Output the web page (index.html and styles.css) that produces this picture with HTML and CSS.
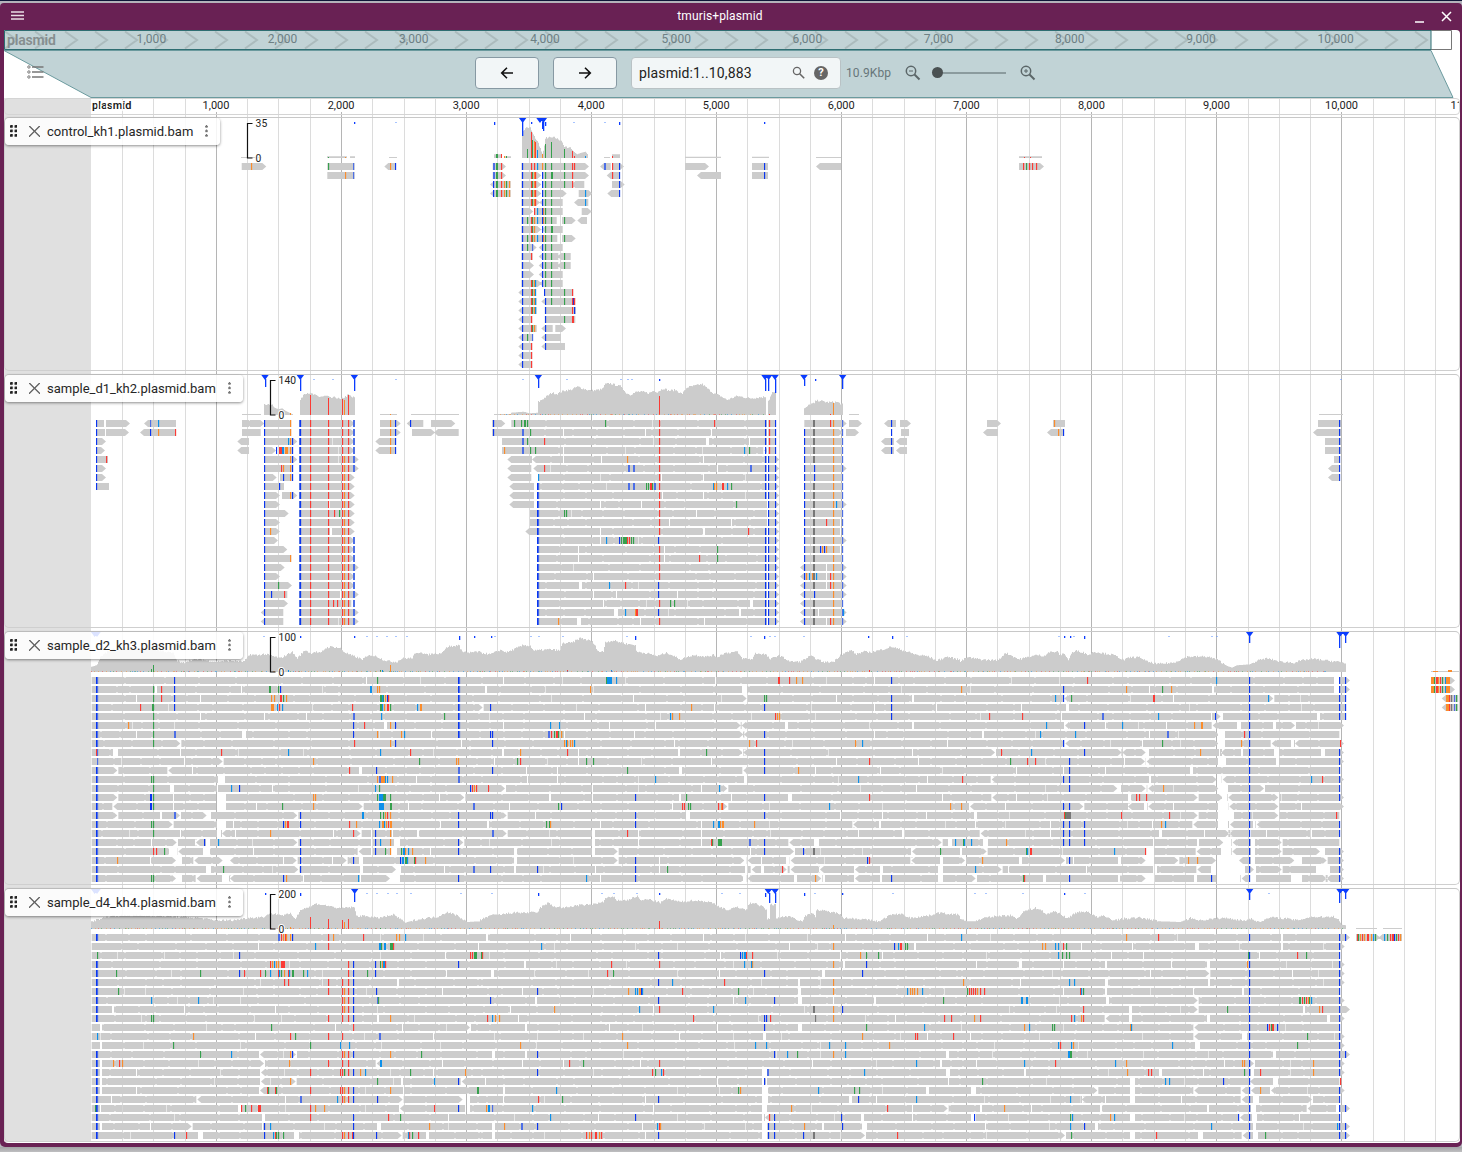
FILE: index.html
```html
<!DOCTYPE html>
<html lang="en">
<head>
<meta charset="utf-8">
<title>tmuris+plasmid</title>
<link rel="stylesheet" href="styles.css">
</head>
<body>
<div class="window">
  <header class="titlebar">
    <svg class="menu" width="14" height="10" viewBox="0 0 14 10"><path d="M0 1h13M0 4.5h13M0 8h13" stroke="#fff" stroke-opacity=".85" stroke-width="1.7"/></svg>
    <span class="title">tmuris+plasmid</span>
    <svg class="winbtns" width="40" height="16" viewBox="0 0 40 16"><path d="M1 14h9" stroke="#fff" stroke-width="1.5"/><path d="M28 4l9 9m0-9l-9 9" stroke="#fff" stroke-width="1.5"/></svg>
  </header>
  <main class="view">
    <svg class="overview" id="overview" width="1456" height="20"></svg>
    <section class="controls">
      <svg class="shade" width="1456" height="48"><path d="M0 .5H1427L1449 47.5H87Z" fill="#c1d3d6" stroke="#6b9a9e"/></svg>
      <svg class="selector" width="18" height="16" viewBox="0 0 18 16"><g fill="none" stroke="#777"><path d="M5 3h11.500M5 8h11.500M5 13h11.500" stroke-width="1.500"/><circle cx="1.900" cy="3" r="1.200"/><circle cx="1.900" cy="8" r="1.200"/><circle cx="1.900" cy="13" r="1.200"/></g></svg>
      <button class="pan"><svg width="14" height="14" viewBox="0 0 14 14"><path d="M13 7H2M7 1.700L1.700 7 7 12.300" fill="none" stroke="#111" stroke-width="1.600"/></svg></button>
      <button class="pan"><svg width="14" height="14" viewBox="0 0 14 14"><path d="M1 7h11M7 1.700L12.300 7 7 12.300" fill="none" stroke="#111" stroke-width="1.600"/></svg></button>
      <div class="search">
        <span class="loc">plasmid:1..10,883</span>
        <svg width="14" height="14" viewBox="0 0 14 14"><circle cx="5" cy="5" r="3.600" fill="none" stroke="#666" stroke-width="1.300"/><path d="M7.700 7.700l4.500 4.500" stroke="#666" stroke-width="1.600"/></svg>
        <span class="help">?</span>
      </div>
      <span class="bp">10.9Kbp</span>
      <svg class="zoomicon" width="16" height="16" viewBox="0 0 16 16"><circle cx="6" cy="6" r="4.700" fill="none" stroke="#5b6668" stroke-width="1.500"/><path d="M9.500 9.500l5 5" stroke="#5b6668" stroke-width="1.900"/><path d="M4 6h4" stroke="#5b6668"/></svg>
      <div class="slider"><i></i></div>
      <svg class="zoomicon" width="16" height="16" viewBox="0 0 16 16"><circle cx="6" cy="6" r="4.700" fill="none" stroke="#5b6668" stroke-width="1.500"/><path d="M9.500 9.500l5 5" stroke="#5b6668" stroke-width="1.900"/><path d="M4 6h4M6 4v4" stroke="#5b6668"/></svg>
    </section>
    <section class="stack">
      <svg class="grid" id="grid" width="1456" height="1044"></svg>
      <div class="ruler"><svg id="ruler" width="1456" height="16"></svg></div>
      <article class="track"><div class="label"><span class="grip"></span><span class="close"></span><span class="name">control_kh1.plasmid.bam</span><span class="dots"></span></div></article>
      <article class="track"><div class="label"><span class="grip"></span><span class="close"></span><span class="name">sample_d1_kh2.plasmid.bam</span><span class="dots"></span></div></article>
      <article class="track"><div class="label"><span class="grip"></span><span class="close"></span><span class="name">sample_d2_kh3.plasmid.bam</span><span class="dots"></span></div></article>
      <article class="track"><div class="label"><span class="grip"></span><span class="close"></span><span class="name">sample_d4_kh4.plasmid.bam</span><span class="dots"></span></div></article>
    </section>
  </main>
</div>
<script src="tracks.js"></script>
</body>
</html>
```
FILE: styles.css
```css
* { box-sizing: border-box; }
body { margin: 0; height: 1152px; overflow: hidden; font-family: Roboto, "Liberation Sans", sans-serif; background: linear-gradient(#0e1638 0 1px, #b4b3bb 1px 1147px, #a3a3a6 1147px, #bfbfc1 1152px); }
svg { display: block; flex: none; }
.window { margin-top: 3px; width: 1462px; height: 1144px; padding: 0 2px 4px 4px; background: #692154; border-radius: 4px 4px 5px 5px; display: flex; flex-direction: column; }
.titlebar { height: 27px; flex: none; display: flex; align-items: center; justify-content: space-between; padding: 0 6px 1px 7px; color: #fff; font-size: 12px; letter-spacing: .12px; }
.title { padding-left: 1px; }
.view { background: #fff; height: 1113px; border-radius: 0 4px 4px 4px; overflow: hidden; display: flex; flex-direction: column; }
.controls { position: relative; height: 48px; flex: none; display: flex; align-items: center; padding: 0 0 3px 23px; }
.shade { position: absolute; left: 0; top: 0; }
.controls > :not(.shade) { position: relative; }
.selector { margin-right: 430px; margin-bottom: 2px; }
.pan { width: 64px; height: 32px; padding: 0; margin-right: 14px; border: 1px solid #8799a3; border-radius: 4px; background: #f2f6f7; display: flex; align-items: center; justify-content: center; }
.search { width: 210px; height: 32px; margin-left: 0; padding: 0 12px 0 7px; border: 1px solid #b9c2c5; border-radius: 4px; background: #f2f6f7; display: flex; align-items: center; color: #222; }
.loc { font-size: 14px; letter-spacing: .13px; flex: 1; }
.help { width: 14px; height: 14px; margin-left: 8px; border-radius: 50%; background: #666; color: #fff; font: bold 11px/14px Roboto, sans-serif; text-align: center; }
.bp { font-size: 12px; letter-spacing: .1px; color: #67767a; width: 59px; margin-left: 5px; }
.slider { width: 69px; height: 2px; background: #8b9b9e; margin: 0 14px 0 16px; }
.slider i { display: block; width: 11px; height: 11px; border-radius: 50%; background: #4a5152; margin: -5px 0 0 -5px; }
.stack { position: relative; display: flex; flex-direction: column; gap: 3px; background: linear-gradient(90deg, #e0e0e0 87.5px, #fff 87.5px); }
.grid { position: absolute; left: 0; top: 0; }
.ruler { height: 17px; margin-bottom: -1px; border: 1px solid #d4d4d4; border-radius: 4px; position: relative; overflow: hidden; }
.ruler svg { margin: -1px; overflow: visible; }
.ruler text { font-size: 11px; fill: #1c1c1c; text-anchor: middle; paint-order: stroke; stroke: #fff; stroke-width: 3px; }
.ruler .ref, .overview .ref { font-weight: 600; text-anchor: start; }
.overview text { font-size: 12px; fill: #6d8084; text-anchor: start; letter-spacing: .05px; }
.overview .ref { font-size: 14px; fill: #858e8f; }
.track { position: relative; height: 254px; border: 1px solid #cfcfcf; border-radius: 5px; border-top-color: #c8c8c8; }
.plot { margin: -1px; overflow: visible; }
.plot text { font-size: 10.300px; fill: #222; stroke: #fff; stroke-width: 2px; paint-order: stroke; letter-spacing: .1px; }
.label { position: absolute; left: 0; top: 0; height: 27px; padding: 0 8px 1px 5px; display: flex; align-items: center; border-radius: 4px; background: rgba(255,255,255,.86); box-shadow: 0 1px 3px rgba(0,0,0,.45); color: #262626; z-index: 1; }
.grip { width: 7px; height: 12px; background: radial-gradient(circle at 1.500px 1.500px, #222 1.400px, transparent 1.700px) 0 0 / 4.500px 4.500px; }
.close { width: 11px; height: 11px; margin: 0 7px 0 12px; background: linear-gradient(45deg, transparent 45%, #666 47% 54%, transparent 56%), linear-gradient(-45deg, transparent 45%, #666 47% 54%, transparent 56%); }
.name { font-size: 13px; letter-spacing: .005px; white-space: nowrap; }
.dots { width: 3px; height: 12px; margin: 0 4px 0 12px; background: radial-gradient(circle at 1.500px 1.500px, #777 1.100px, transparent 1.500px) 0 0 / 3px 4.500px; }
```
FILE: tracks.js
```js
const COLORS = { r: '#fb3b35', g: '#36a04d', b: '#0a36f0', p: '#4d6fe6', c: '#0d90ea', o: '#fa8c2c', k: '#777777' };
const GREY = '#cccccc';
// Read rows, one string per row.  a~b read, > and < arrow tips, letter+x base mark, _ gap, ' faint gap.
// "all" marks carry a row range.  Positions are thirds of a pixel from "off" unless s is 1.
const T1 = { max: 35, axis: 247, chunks: [
 { off: 0, s: 3, all: '', rows: ['725~799> o755 982~1064 g985 p1061 <1153~1187 o1171 b1186', '982~1064 o1036 p1061'] },
 { off: 0, s: 1, all: '', rows: ['685~709> 752~768 b764 <816~841 1019~1044> r1023 g1026 r1029 r1032 r1036', '<697~721 752~768 b764'] },
 { off: 480, s: 3, all: 'b127@0-22 r154@1-4 g158@1-4 o163@1-4 r166@1-4 g196@0-13 g214@0-13 b187@1-13 r154@6-8 g158@6-8 o162@6-8 r154@13-16 g158@13-16 o162@13-16 c166@13-16 r154@18-18 g158@18-18 o163@18-18', rows: [
 '38~78> p41:2 g50:2 r64 124~327> r154 r163 c172 o187 g253 r278 r283 <360~392 p372:2 396~432> r397 b418',
 '38~78> p41:2 g50:2 r64 124~184> 186~327> g214:2 g253 r278 <380~420 r397 b418',
 '<30~92 b41 g50:2 r64 o73 g79 o88 124~184> 186~280 g253 r278 <274~313 396~434> b418',
 '<30~92 b41 g50:2 r64 o73 g79 o88 124~184> 186~260> 296~337> c316 <382~420 b418',
 '124~180> <178~248 <282~325 c316', '124~160> 163~248 r163 c172 o190 305~335>',
 '124~170 g142 <155~230 c172 o190 246~287> g253 <292~321', '124~184> <184~248 g214:2',
 '124~170 g142 <155~232 c172 o190 246~287> g253', '124~170> g142 p157 <176~248', '124~158 r154 <176~235 <232~272 g253',
 '124~162> <176~235 <232~272 g253', '124~162> <176~248', '124~185> <178~248', '<115~165 192~280 b194 g214 g253 r278',
 '<115~170 <184~286 b196 g214 g253 r278 b281 r284', '<115~170 194~288 b196 r278 b284', '<115~157 r154 194~286 b196 g253 r278:2',
 '<115~170 <184~218 b196 226~258>', '<115~158 g142 p157 <184~243 b196', '<115~157 r154 <184~255 b196', '<115~157 r154', '<115~157 r154'] }],
 cov: [{ off: 480, y: -22, base: 143, areas: ['42 132 66 132', '72 138 92 138', '128 66 135 52 150 52 155 66 165 84 175 100 184 126 187 132 192 105 196 82 222 82 232 86 245 92 250 110 270 111 276 120 290 132 300 128 315 124 324 134', '374 141 390 141', '396 132 420 132'], bars: 'g50,132:2 r64,132 o73,138 g79,138 g142,116 r154,66 g158,90 o163,92 r166,96 c172,118 o187,132 g196,102 g214,96 g253,117 r278,122 r283,136 c316,137 r397,138', tris: [128, 180, 190], blues: '128,14 187,7 190,9 196,4 155,2 42,3 281,1 419,3 373,1' },
 { off: 0, y: 350, base: 472, areas: ['725 470 786 470', '982 467 1040 467', '1050 467 1064 467', '1168 470 1190 470', '2055 468 2163 468', '2256 468 2306 468', '2450 469 2523 469', '3057 467 3126 467'], bars: 'g985,470 o1036,470 r3072,470 r3090,469', tris: [], blues: '1062,2 1187,1 2294,2' }] };

const body2 = (extra, end) => '208~' + (end || '374>') + ' ' + extra;
const T2 = { max: 140, axis: 270, chunks: [
 { off: 0, s: 1, all: 'b96@0-7 b891@0-3 b1339@0-6', rows: ['97~104 106~130> <144~152 p150 151~176 c158 <884~896 849~862> 900~911> 987~1001> 1053~1065 o1054 1318~1341', '97~105 106~129> <140~152 152~176 b150 o158 r175 846~859> 901~909 <983~998 <1047~1064 o1058 b1063 <1313~1341', '97~106> <881~894 <896~907 1325~1341', '97~105> <881~894 <896~907 1325~1341', '97~108 r106 1334~1340', '97~106> <1328~1340', '97~106> <1328~1340', '97~109'] },
 { off: 230, s: 3, all: 'b103@0-22 p208@0-22 b211@0-22 r241@0-22 r295@0-22 r337@0-22 o343@4-22 r355@0-22 p370:2@0-5 p370:2@13-22', rows: [
 '36~68> 60~103> 104~184 o181 ' + body2('450~512> o481 b496 <530~580 b541 603~676>'), '36~92 104~184 o181 ' + body2('450~512> o481 b496 546~615> <612~686'),
 '<22~57 104~202> c175 o180 b187 ' + body2("'307 <436~498 o481 b496"), "<22~57 104~138> b139 148~188 r149:3 c158:2 o166:3 o181 b187 " + body2("'325 <436~498 o481 b496"),
 '104~202> o181 b187 ' + body2("'325", '386>'), '104~188 r154 o160 o181 b187 ' + body2('', '386>'), '104~140> 150~188 b160 o181 b187 ' + body2(''), '104~162 b148 ' + body2(''),
 '104~150> 156~202> o181 b187 ' + body2(''), '104~150> ' + body2('_299'), '104~176> ' + body2('r313 g328'), '104~150> ' + body2(''), '104~150> o121 ' + body2('_302:2'), '104~144> ' + body2(''), '104~172> ' + body2(''),
 '104~184 o181 ' + body2(''), '104~164> ' + body2('', '386>'), '104~150> ' + body2(''), '104~186> g145 ' + body2(''), '104~172 b124 r163 ' + body2('_332', '386>'), '104~174> ' + body2('r310 r322', '364'), '<92~160 ' + body2('', '386>'), '<92~160 ' + body2("'325", '386>')] },
 { off: 490, s: 3, notch: [150, 820], all: 'p144@7-22 b142@7-22 r508@0-12 r508@14-17 r508@20-20 r508@22-22 b504@13-13 b504@18-19 b504@21-21 p827@0-8 p827@12-22 b825@0-8 b825@12-22 _831@0-22 b835@4-22 r838@0-3 b855@0-22 b942@1-22 k971:2@0-4 k971:2@7-18 k971:2@20-22 o1030@0-22 p1057@0-22', rows: [
 "6~46> b9 64~858 g73 g94 g104:2 g112 g346 '488 r673 943~1070> r1021", "6~858 b9 p96:2 g121 _220 _466 _664 943~1058>",
 "36~858 p96:2 g112 r163 '489 _649:3 _778 943~1058", "36~820 o43 p96:2 g121 g136 _220 '406 '636 c763 g778 <822~858 943~1058",
 '<52~126 <126~868> _220 _334 o412 _640 943~1058', "<52~124 <130~868> r163 '180 p414:2 p429:2 _682 p780:2 943~1070> b973", "<52~124 145~868> c145 '330 _514 _640 '767 943~1058 b973",
 "<58~132 142~868> '350 p414:2 p429:2 g470 g475 r481:2 g486 p492:2 c670 o674 o679 r698:2 c712 g724 943~1058", "<58~132 142~868> _516 _640 '767 943~1058", '<58~132 142~868> _331 _455 g739 943~1070> _1030 c1039',
 "120~868> g223 g229 '245 _620 943~1058", '120~868> _538 _724 943~1050 r1009', '<106~868> _331 _641:2 r775 943~1050', "142~868> _331 c349 b388 g394 g401:4 r412 r418 g424 g430 '446 943~1070>",
 '142~868> _264 _524 g682 943~1050 b991 o997 b1004 o1008', '142~868> _264 _524 r628 g682 943~1058', "142~868> '250 <930~1070> _1008", "142~868> _310 <930~1070> o949 c958 o967 c979 _1008 r1021",
 "142~868> _267:3 c358 r406 '446 <930~1070> _1008 r1021", '142~868> _310 _380 _563 <930~1070> b973', "142~868> _340 '468 g541 g553 '592 _781:3 <930~1058", "142~868> _372:4 c406 o436 r440:2 '534 _748:2 <930~1070> c1060 _985", '142~868> o205 _263:4 _451 _643 <930~1070> _1008 r1021'] }],
 cov: [{ off: 230, y: 12, base: 135, areas: ['36 133 92 133', '104 105 110 102 125 103 130 112 145 118 155 115 165 122 180 130 188 133', '211 90 220 72 230 68 245 72 265 80 290 78 300 84 315 82 330 88 345 80 355 74 365 82 374 82', '450 133 500 133', '543 134 686 134'], bars: 'o181,130 r241,75 r295,84 r337,88 o343,90 r355,75 o481,133', tris: [105, 211, 373], blues: '105,8 211,12 373,12 306,1 250,1 497,1' },
 { off: 490, y: 12, base: 135, speck: [30, 828], areas: ['12 133 64 132', '65 128 100 125 118 130 143 128', '146 95 160 85 175 75 185 68 200 72 220 62 240 60 262 50 275 55 300 62 320 60 335 58 345 42 360 40 375 45 395 50 405 68 420 74 440 65 460 66 475 70 490 62 500 66 520 55 535 62 555 60 575 72 590 52 610 48 635 42 650 55 670 70 690 78 710 90 740 78 780 85 828 80', '836 90 845 66 858 70', '943 115 960 102 972 100 976 92 990 92 1010 97 1040 96 1058 104', '1078 133 1107 133', '2487 132 2557 132'], bars: 'r508,79 r838,131 r1021,131 o1030,98', tris: [145, 825, 836, 855, 942, 1058], blues: '145,9 827,12 836,12 855,14 942,7 1058,10 507,2 97,1 230,1 390,1 412,1 425,1 975,2 2550,1' }] };

const T3 = { max: 100, axis: 270, chunks: [
 { off: 0, s: 3, base: [275, 1440], notch: [300, 1440], all: "p292@0-22 b289@0-7 b289@10-22 g459@1-7 g459@11-14 b524@0-3 p1379@0-6 b1376@0-6", rows: [
 '_1098 g1132 \'1262', "g809:2 g835 b841 _467:2 r484 _724 '967 c1111:2 o1132 o1138", '_409 r484 _601 o815 o823 r842:2 g850 o859 g1141:4 c1148 o1156 b1163 r1166', "r421 '505 g456 o815:3 c832 r838 c847 '936 r1057 g1141:2 c1147 o1153 r1163:2 g1170 c1252 o1260:2",
 "_601 _794 _919 p1061:2 g1333 c1144", "o385 '396 '524 b1061 r1093 _1152:3 o1171 b1186", "_408 p524:2 _727:4 b1061 o1132 '1138 o1204 c1213 _1295", '>541 r1063 o1171 b1186 _1383',
 "r289 _340:5 _541 r664 '715 c865 '910 c1141 r1231 '1300", "'363 _553 >668 o940 g1258 o1370 o1375", '>352 <505 _578 r1048 _1078:3 b1129 p1376:2', 'g453 _655:7 o1132 p1138:2 o1144:4 c1152:2 c1162 o1177 _1250 p1376:2',
 "_511:4 _652 c694 b717 _817 '1075 c1126 g1138 b1411 r1417 o1423 r1429", '>352 b450:2 _520 _650:10 o940 o946 g1132 c1139:3 g1150:3 c1146 g1170 _1318 >1393', '<340 b450:2 _520 _650:10 _769 g847 o940 >1088 c1138:5 g1170:2 _1225 p1421:2',
 '>352 _480:2 p524:2 >540 >620 _622:4 >892 b900 c1086:2 g1141 g1150 o1156 r1163 o1170 b1376', "g453 g459 >518 _652:9 _700 b851 o857 r863:2 b900 r1048 o1069 c1138 o1146:2 c1152 o1159 r1165 o1171:2 _1320 b1376", "'388 g459 _540 _652:5 <666 _706 o811 _1001 r1060 >1082 _1115 b1126 o1171 _1178 _1251:2",
 "_453 >530 _532 <588 b613 _620:4 c655 '758 >892 b900 _1113:2 b1126 c1141 o1171 _1182:6 b1376 >1390", 'r461 r469 g493 _507:8 <535 _610:7 _760 b900 <1076 _1113:2 b1126 g1156 o1171 _1175:6 g1205 c1211:2 o1217 c1226 o1237 _1290 b1376', "o352 _452 >528 _530:6 <583 >668 _670:6 <690 _850 >890 b900 _997 >1040 b1061 _1079:4 b1200 c1207:2 g1216:2 c1222 g1243 r1246 o1276",
 "_620:5 g670 '817 >895 b900 _1080:3 >1188 _1190:5 _1334 p1421:2", 'g453 g459 >528 _530:6 <590 _667:8 <690 b851 o858 _909 c1075 _1080 >1170 _1172:10 b1376'] },
 { off: 480, s: 3, base: [0, 1440], notch: [0, 1440], all: '', rows: [
 "_71 '247 g379 c382:5 c409 '437 _705 r896:2 r928 o949 o967 '1040 _1183 b1235", "_15:2 '196 o331 '339 _787:5 '1263", "'213 _461 '725 >800 g853 g859 _1068 b1235 _1296:2", "b30 >8 '290 _496 o634 _704 b853 '995 _1183 b1235 _1370",
 "'28 _313 '540 c571 o577 o598 '814 r886 o892 o898 '1005 b1235", "_71 c211 c238 _387 _526 >782 <785 _915:3 '1168 _1296:2", "b30 b38 p206:2 r214 g223 r228:2 g234 o243 g245 _252 _463 >790 <792 b853 _1184", "b38 o253 c258 o262 o271 o278 c282 _583 o808 r829 '938 o1126 c1147 _1402",
 "_68:2 o121 r262 _294 _595:2 g679 >788 _787 <790 b853 '1045 _1296 ", "_43 g112 r121 '202 _294 g319 g340 '483 _695 b853 _1068 r1168 _1314", "b38 _140 _232 g442 _597:3 <790 b853 o955 _1006 _1200 '1387", "_142 _232 '475 c526 _793:3 '1075 c1135 _1343",
 "r25 >75 _337 '475 _665 c718 >742 '1142 _1310", "_209:2 _337 b466 _597:2 g619 _755 b853 _924:4 r1168 _1388", "_89 g235 b244 _577 r606 r612 g625 g631 r715 o723 r727 >742 '869 c1048 '1207 o1411", "b30 b38 >80 _166 b466 _620:4 b853 _1082 _1207 _1340",
 "_22:2 g199 g208 o211 _361 b466 _665 c700 c716:2 o722 o728:2 o823 '869 <1120 _1199:2 '1395", "p38:2 >80 '209 _338:3 r442 _475 _665 '870 _1135 _1268:3", "'28 '213 _338:3 _475 _665 r694 g697 g716:4 p809:2 b853 <928 _1004:5 >1385 _1405:4 c1426", "_103:3 _338:3 >413 _810 b853 >942 b971 k1000:2 '1022 '1147 <1296 g1381", "_103:3 '280 >413 b466 _537 >793 _794:3 <803 _844 _918:4 <932 '1033 b1162 r1168 <1294 _1380:3", "b30 _103:2 b172 '191 _346 b466 _537 g562 _795:3 <815 _844:3 r907 >920 <932 <1020 <1125 _1200:3 _1375:5", "c319 _361 b466 >795 _790:5 <803 _944:3 o1006 >1024 _1030:2 <1125 b1235 _1200:2 _1375:5"] },
 { off: 960, s: 3, base: [0, 1138], notch: [0, 1100], all: 'b868@0-22 b310@1-2 b310@11-11 b310@7-7 b310@14-14 b310@16-18 b328@9-12 b328@14-18 b328@20-20 b328@22-22 b373@5-5 b373@8-8 b373@16-18 b1138@2-4 b1138@8-13 b1138@16-17 b1138@19-22 b1156@0-4 _310@10-10', rows: [
 "'154 '298 r382 c769 _1123:5 1138~1170> b1138", "o4 '31 o499 _568 g607 o634 _757:2 _1123:5 1138~1170> b1138", "c286 <313 g334 '511 r580:2 _639 c925 >940 '1022 1130~1158", "_184 _318:3 '688 '1023 1130~1158", "'62 r88 r187 _305 p428:2 c595 _755 b766 >782 _783:2 _1072:3 1130~1158",
 "c259 <315 _437 c487 '534 _619 o703 o725:2 <758 _833:4 _941:3 >1005 '1076 1130~1152>", "_66:2 '226 c241 c346 _568 p622:2 '655 >776 _776:7 r853 ", "b310 <316 '452 _547 g607 '661 >775 _776:7 o844 <935 _995:4 <1005 1130~1152> r1141", ">105 r124 c214 >485 <487 >557 _560:3 o721 _778:3 <783 _843:2 _942:5 _1085:4 1130~1152>", "g151 r202 r226 '256 _494 >555 <560 _776:8 _949:3 1130~1152>", "_169 _437 _691:3 ", "r7 <95 _309 _568:2 >770 _772:5 <788 c1054 r1087 1130~1152>",
 "'256 >472 _475:3 >557 <565 o610 '640 >775 _777:9 >912", "_169 <97 '263 _506:3 r529 r538 r559 >713 >788 _788:6 <805 >955 '963 1130~1152>", "o4 <30 _135 >370 _502 <504 _554:4 <565 _640 _776:10 <808 >955 _1024 1130~1152>", "_42:3 '149 r313 g315 k318:5 r484 r628 '661 >713 _776:16 '878 >955 r1130 ", "_45 '137 _272 '502 _578 o604 c616 <700 _776:10 <810 _880:2 <890", "<62 '197 _272 _598:3 _732 >808 <808 _870 _920 _1050:2 ", "g11 c14 c34 _70:5 o139 _580 _712:2 >790 _790:8 <818 _875:4 >965 ", "_0:2 >80 g200 c203 r212:2 '306 c463 r556 _560:8 <710 _784:11 <817 _875:4 >965 >1080 _1082:5 1130~1152>", ">15 o67 _178:3 >315 _340 _475:3 >557 _558:8 >655 o685 o712 >768 _769:22 <837 _875:4 >1003 _1005:7 >1100 1130~1152>", "c46 _145 >125 _379 _580:4 <712 _755:34 >882 _883:2 >965 _1068:14 1130~1152>", ">47 _48 r192 g190 _250:3 _475:2 >557 _558:9 _704:3 b754 _768:24 <845 _870:6 _993:11 >1100 <1100 1130~1152>"] },
 { off: 960, s: 3, all: '', rows: ['1413~1485> o1413:3 g1424 r1428:2 o1436 r1442 g1447 c1456 o1460:4', '1413~1485> o1413:3 g1424 r1428:2 o1436 r1442 g1447 c1456 o1460:4', '<1445~1495 o1460:3 r1469 k1474 g1488 p1482', '<1445~1495 o1460:3 r1469 k1474 g1488 p1482'] }],
 cov: [{ off: 0, y: 34, base: 156, speck: [275, 1440], areas: ['275 140 290 135 300 110 330 90 380 85 440 85 480 92 520 100 528 120 545 130 570 120 600 118 640 125 690 122 730 125 750 103 770 106 790 102 810 106 840 115 875 95 890 115 900 105 915 90 930 100 945 95 960 100 975 85 990 80 1005 82 1020 85 1030 95 1050 105 1085 118 1110 105 1130 110 1150 120 1175 125 1190 125 1205 115 1235 115 1240 105 1260 95 1280 105 1300 100 1320 100 1345 78 1360 80 1376 72 1380 90 1400 98 1440 95'], bars: 'g454,148 g460,136 o1171,136 g1141,151 c1147,151 c865,151', tris: [284, 291], blues: '902,2 1062,2 1100,1 1130,1 1160,1 1187,1 1220,1 1377,4 1422,2 789,1' },
 { off: 480, y: 34, base: 156, speck: [0, 1440], areas: ['0 98 30 103 60 90 80 97 130 75 150 78 160 92 210 88 240 92 245 70 275 68 300 54 335 64 355 95 370 95 374 66 400 62 440 72 466 75 468 95 500 100 530 108 560 98 600 118 640 105 680 110 700 105 710 112 730 100 770 95 785 115 815 118 825 100 855 103 870 118 895 105 930 125 960 125 990 108 1030 127 1060 125 1080 105 1115 90 1125 103 1150 95 1170 97 1200 90 1235 80 1270 92 1310 105 1340 108 1370 122 1400 110 1440 120'], bars: 'r262,150 r1168,150 c394,151', tris: [], blues: '33,2 42,1 152,1 175,1 247,1 440,1 467,4 810,1 854,3 868,1 884,1 971,1 1166,2 1236,3 1280,1' },
 { off: 960, y: 34, base: 156, speck: [0, 1100], areas: ['0 125 20 112 60 118 80 120 115 120 135 98 160 110 175 118 230 105 250 108 265 97 290 95 300 105 312 100 325 122 332 100 350 92 370 98 385 105 400 95 430 100 460 105 490 120 510 112 540 112 560 125 590 132 640 128 680 110 740 110 770 118 800 138 815 143 830 136 868 133 890 122 920 115 960 125 1000 128 1030 120 1060 117 1100 122 1130 125 1158 130', '1413 153 1497 153'], bars: 'o1420,153:5 o1465,150:4', tris: [869, 1140, 1157], blues: '869,7 1139,12 1157,7 312,2 331,2 340,1 374,3 295,1 625,1 755,1 768,1' }] };

const T4 = { max: 200, axis: 270, chunks: [
 { off: 0, s: 3, base: [275, 1440], notch: [300, 1440], all: 'p292@0-0 p292@3-9 p292@13-22 b289@0-0 b289@3-9 b289@13-22 r1027@5-9 o1033@6-8 r1045@3-9 r1027@13-15 r1027@17-18 r1027@22-22 o1033@13-13 o1033@15-15 o1033@17-18 o1033@22-22 r1045@13-15 r1045@17-18 r1045@22-22 b1061@3-9 b1061@13-13 b1061@15-15 b1061@17-18 b1061@20-22', rows: [
 "p835:2 r844 o850 r855 o859 o871 b877 r985 o1000 r1090 '1141 o1189 o1198 c1216 '1271", "_775 c946 r985 c1138:3 g1145 c1152:2 g1171:3 r1180 _1436", "g292 '352 '493 '700 b719 '1141 _1335 r1411 r1418 g1422:3", "r811 o818 c823 o829 o835 r845:4 '868 b1126 g1141 o1146 c1150:2 r1157 b1376 ", "g349 '514 g601 b719 r733 r781 g796 c811 r835 c838 g844 o853 r865 c868 g878:2 g910 c922 '967 g1102 b1126 _1338", "'781 r853 r865 '967 r985 _1192:2", "g355 '373 '436 '729 r985 '1098 b1129 _1327",
 "c454 '532 c595 '721 g1135 p1132 '640", "_337:2 _553 _827 '1131", "'425 g454 g460 '763 '843 r985 _1133:2 o1171 '1243", "_300:2 '618 g814 _1007 r1060 _1208 '1338 >1410", "c292 '302 o580 _765 r871 g886 r985 r1027 '1094 p1137:2 _1299", "_300:2 '430 g520 '722 g931 c1021 c1048 '1143 '1320", "g601 c694 <780 '851 o871 b877 >888 o1171 g1264", "_302:2 o340 r358 o367 '594 >792 o869 r985 <1130 c1142:2 _1327", "_302:2 _409 '661 <783 '854 r931 r1021 g1033 r1027 o1081 c1096 '1171 g1231 _1299 o1396",
 "_302:2 '642 <783 '812 o871 >887 g1132 '1180 _1205:2 c1303 b1376 <1385", "_302:2 _410 <780 r803 g806 r827 g829 r931 r1021 '1096 o1171 _1210 g1433:2", "_333 <592 _856 p900:2 c1012 b1131 >1208 >1388 _1390:7", "_302 g285 '367 '498 _714:3 r724 g736 r754 r774:3 '856 r931 o946 o973 '1097 <1200 r1303 b1376 _1395:5", "'522 _787:3 r931 r1165 g1201 _1344", "_302:2 _452 >575 b793 c811 _787 '972 _1133:4 o1288 '1344", "'391 b524 r559 _596:5 b793 c820 r826 g829 g835 g850 _882:5 r1057 b1129 >1205 c1226 r1229 g1237 r1255 _1278:3"] },
 { off: 480, s: 3, base: [0, 1440], notch: [0, 1440], all: 'o1060@1-1 o1060@3-3 o1060@5-6 o1060@8-9 o1060@13-13', rows: [
 "_20:2 _270 _671 '797 '982 _1096 _1342", "c184 '223 '466 '593 _928 '1013 b1243 c1255 r1262:2 g1276 g1282 _1302:2", "g4 r7 '28 b535 _721 b781 c787 c794:2 r798 r817 '893 _1080 o1141 g1159 g1195 _1208", "_134:2 '228 r394 r538 '440 '759 c793 c814 o817 _1090:2 b1160", "_34:3 '162 '325 r382 g400 '593 _719 b854 _1027:3 b1148", "b535 c577 r733 '845 _954:2 '1020", "_127 b173 '339 o445 c466 c472 o478:2 b484 c487 r607 g775 '821 _954:3 c1282 o1291 o1297 o1303 o1313 c1328 '1394",
 "b30 _165:2 b535 _760 c796 b884 _954:4 _1060 _1183:2 g1390", "_91 o223 c478 _520 r538 c700 '974 k1000:2 b1086", "r22 c37 o46 o58 _115 r640 '836 b854 b860 r871 k1006 '1155 _1246 r1393 r1414", "_135:2 _388 '486 _713 b854 _954:4 g1159 c1333", "'43 '171 '310 o427 _597 '760 _849:3 '904 o1147 '1260 r1306 r1312 _1343 r1420", "o121 '170 o442 '763 c826 c859 '1022 c1048 c1096 o1228", "_36:3 _136:2 b173 '430 b883 '890 c922 g952 '1022 c1096 _1400:3", "_127 _250 r268 g310 _482 r538 _998 '1190 c1310 _1380:2", "b173 '339 r517 g526 c544 r550 _846:5 p863:2 c1153 _1398:4",
 "_17 _713 b854 _847:2 _860 _1405", "_69:2 c229 '593 '719 g775 o781 _847:6 c1015 g1123 g1138 '1208 _1338:3", "_71 r175 '193 g247 _496 b535 _847:6 _1107:3 b1135 _1188 c1309", "o19 c26:2 p38 c157 _520 _848:5 o934 '993 r1222 _1296 >1403", "'103 c211 _355 b466 '593 _846:3 <855 r868 b883 '1063 b1085 _1145:3 _1298", "_37:3 o73 p125:2 b173 _486 c532 o541 r538 '673 '797 _847:5 b865 b883 o973 _1027:2 b1086 _1147:5", "_37:3 '193 r319 o328 r333 r345:2 o359 r364 _496 b535 _846:5 b865 b883 b971 k1000:2 '1080 >1155 r1252"] },
 { off: 960, s: 3, base: [0, 1138], notch: [0, 1100], all: 'b868@0-0 b868@2-22 b1138@0-15 b1138@17-22', rows: [
 "c4 '91 o499 r595 '652 _963:2 1130~1170> b1156", "o247 o256 c286 c295 r310 g319 _364 _517 _707:4 '838 _963:2 '1091 1130~1154>", "'78 c295 g307 g319 g328 _455 _550 g864 _899 r1012 g1039", "_50 _178:3 _309 _437:2 _633 _743:3 o862 '980 '1117 1130~1154>", "'277 _570 >748 _998 '1076 1130~1154>", "o10 _180 c328 c343 _437:3 _744:2 '1091 1130~1154>", "g23 r27 r34 r40 r46 o52 r61 r73 _309 r361 c364 g370 _437:2 '570 _701 _846:2", "c183:2 c198:2 '299 _438:3 >713 _870 g1017:2 r1027 g1033 r1039 o1044 g1049 c1055 1130~1154>", "'148 '289 r370 _508:3 '662 >713 g802 _1029:2 o1078 r1087 1130~1170>", "o43 r61 r334 c343 o364 r370 <437 _508:3 _743:3 _1102:3 1130~1154>", "'4 o193 c208 g277 g283 '310 o511 c514 <703 b922 r928 g934 r938:2 b951 '975",
 "_31 '238 '546 <703 _846:5 g1042 '1123 1130~1154>", "'104 c295 r301 c334 o340 '355 c637 _705:5 g1012 1130~1154>", "'97 c325:2 g331:2 '382 '549 '745 _940:3 1130~1170> b1156", "_50 c193 r286 c466 o499 _793 o847 o853 >882 '991 o1061 1130~1154>", "_192:2 '445 o502 r565 r574 _598:3 _729 g852 _875:3 r901 '991 o1061 1130~1154>", "g67 '259 _510:5 c616 c628 '673 b790 <870 _940:5 r1141", "_34:5 >412 _510:5 <703 <845 <873 o901 <933 '1041 1130~1154>", "'73 '270 c331 _363 <365 _436 _510:5 _664 <845 _880:6 >1056", "_62:2 o133 _214 _420:2 _743:2 _875:5 <1043 _1130:3 1134~1170> b1156", "_35:5 b43 '145 g330 c337 o451 c463 _510:5 '673 b834 <840 _878:5 _1019", "_77 c331 '267 _405:3 b373 c754 _880:3 '1031 c1132 1130~1170> b1156", "'78 g334 >315 _510:5 r589 _714:5 <848 _880:5 g916 1130~1170> b1156"] },
 { off: 960, s: 3, all: '', rows: ['1188~1260> r1191 g1196 o1201 r1207 o1212 r1223:2 o1234 c1240 g1247 <1256~1326 c1272 g1281 r1291 r1297:2 b1304 g1310 r1315 o1322'] }],
 cov: [{ off: 0, y: 10, base: 131, speck: [275, 1440], areas: ['275 108 300 100 330 92 380 90 480 92 540 95 600 98 640 105 700 105 740 98 790 95 800 88 820 85 850 90 870 85 885 100 900 75 905 70 930 65 945 55 975 60 1000 65 1020 70 1040 66 1064 66 1066 92 1100 92 1130 98 1150 95 1180 88 1215 112 1240 105 1280 98 1310 95 1340 80 1370 90 1400 110 1440 108'], bars: 'r931,96 r985,102 r1027,105 o1033,109 r1045,102 o871,126 g1141,127', tris: [284, 291, 1064], blues: '1064,9 902,3 795,2 1099,1 1129,1 1162,1 1190,1 1232,1 1380,1' },
 { off: 480, y: 10, base: 131, speck: [0, 1440], areas: ['0 104 30 90 60 88 100 82 150 82 175 80 178 68 205 52 215 62 250 68 290 60 330 58 370 50 375 38 400 35 410 45 440 45 470 32 480 45 505 42 540 52 560 40 600 50 640 45 690 50 720 65 745 75 770 64 800 75 805 55 820 52 850 66 858 75 860 100 867 100 868 58 886 57 888 98 925 92 965 108 975 92 1000 82 1005 95 1008 74 1040 78 1080 85 1090 98 1130 100 1200 108 1225 90 1260 85 1290 98 1350 90 1370 82 1430 88 1440 90'], bars: 'r538,107 o1060,119', tris: [865, 885], blues: '867,10 885,10 857,4 174,3 33,1 365,1 400,1 468,1 537,2 725,1 778,1 972,3 1003,1 1087,2 1237,1' },
 { off: 960, y: 10, base: 131, speck: [0, 1150], areas: ['0 100 20 108 45 108 70 98 110 92 150 90 170 100 190 78 225 68 245 75 255 88 280 78 300 85 320 100 345 82 380 78 410 96 430 92 460 105 490 100 540 97 600 108 660 110 690 98 720 105 760 100 800 98 850 106 870 100 900 110 930 96 980 100 1010 105 1050 95 1100 95 1115 92 1135 102 1143 118 1158 120', '1188 129 1250 129', '1270 129 1326 129'], bars: '', tris: [869, 1140, 1157], blues: '869,7 1139,10 1157,6 43,1 75,1 187,1 312,2 374,1 925,1' }] };

let seed = 7;
const rnd = () => (seed = (seed * 16807) % 2147483647) / 2147483647;
const rect = (x, y, w, h) => `M${+x.toFixed(2)} ${+y.toFixed(2)}h${w}v${h}h${-w}z`;

// Every plot starts at page x 4; its first read row sits 46px below its top edge.
function drawTrack(t, n) {
  const top = 46, paths = {}, add = (c, d) => { paths[c] = (paths[c] || '') + d; };
  let holes = '', faint = '', reads = '', cov = '', specks = '', tri = '';
  t.chunks.forEach(ch => {
    const px = z => ch.off - 4 + z / ch.s;
    const mark = (k, x, w, row) => add(k, rect(Math.floor(px(x)), top + row * 9, w === 1 ? 1.15 : w, 7));
    for (let row = 0; row < 23; row++) {
      const y = top + row * 9;
      const src = ch.rows[row] || '';
      if (ch.base) reads += rect(px(ch.base[0]), y, (ch.base[1] - ch.base[0]) / ch.s, 7);
      src.split(/\s+/).filter(Boolean).forEach(tok => {
        let m = tok.match(/^(<?)([\d.]+)~([\d.]+)(>?)$/);
        if (m) {
          const a = px(+m[2]), b = px(+m[3]), l = m[1] ? 4 : 0, r = m[4] ? 4 : 0;
          reads += `M${a.toFixed(1)} ${y + (l ? 3.5 : 0)}L${(a + l).toFixed(1)} ${y}H${(b - r).toFixed(1)}L${b.toFixed(1)} ${y + (r ? 3.5 : 0)}${r ? '' : 'v7'}L${(b - r).toFixed(1)} ${y + 7}H${(a + l).toFixed(1)}${l ? '' : 'H' + a.toFixed(1)}z`;
          return;
        }
        m = tok.match(/^([a-z_'<>])([\d.]+)(?::(\d+))?$/);
        const x = px(+m[2]), w = +(m[3] || 1), k = m[1];
        if (k === '_') holes += rect(Math.floor(x), y, w, 7);
        else if (k === "'") faint += rect(Math.floor(x), y, 1, 7);
        else if (k === '>') holes += `M${x - 4} ${y}H${x + 1}V${y + 7}H${x - 4}L${x} ${y + 3.5}z`;
        else if (k === '<') holes += `M${x + 4} ${y}H${x - 1}V${y + 7}H${x + 4}L${x} ${y + 3.5}z`;
        else mark(k, +m[2], w, row);
      });
      if (ch.notch) for (let z = ch.notch[0] + rnd() * 80; z < ch.notch[1]; z += 40 + rnd() * 110) {
        const x = Math.floor(px(z));
        holes += rect(x, y, 2, .6) + rect(x, y + 6.4, 2, .6);
      }
    }
    ch.all.split(' ').filter(Boolean).forEach(tok => {
      const m = tok.match(/^([a-z_])(\d+)(?::(\d+))?@(\d+)-(\d+)$/);
      for (let row = +m[4]; row <= +m[5]; row++)
        if (m[1] === '_') holes += rect(Math.floor(px(+m[2])), top + row * 9, 1, 7);
        else mark(m[1], +m[2], +(m[3] || 1), row);
    });
  });
  t.cov.forEach(c => {
    const base = 41, px = z => c.off - 4 + z / 3;
    c.areas.forEach(s => {
      const p = s.split(' ').map(Number), a = p[0], b = p[p.length - 2];
      let i = 0;
      for (let x = Math.floor(px(a)); x < px(b); x++) {
        const z = (x + 4 - c.off) * 3;
        while (i < p.length - 4 && z > p[i + 2]) i += 2;
        const f = Math.max(0, Math.min(1, (z - p[i]) / (p[i + 2] - p[i] || 1)));
        let h = (c.base - (p[i + 1] + f * (p[i + 3] - p[i + 1]))) / 3;
        if (h > 8) h += (rnd() - .5) * 2;
        h = Math.max(1, +h.toFixed(1));
        cov += rect(x, base - h, 1, h);
      }
    });
    c.bars.split(' ').filter(Boolean).forEach(s => {
      const m = s.match(/^(\w)(\d+),(\d+)(?::(\d+))?/), h = Math.max(1, Math.round((c.base - m[3]) / 3));
      add(m[1], rect(Math.floor(px(+m[2])), base - h, +(m[4] || 1), h));
    });
    if (c.speck) for (let z = c.speck[0]; z < c.speck[1]; z += 3 + rnd() * 14)
      specks += `<path d="${rect(Math.floor(px(z)), base - 1, 1, 1)}" fill="${COLORS['rgoco'[Math.floor(rnd() * 5)]]}" opacity=".5"/>`;
    c.tris.forEach(z => { const x = px(z); tri += `M${x - 3.7} 1h7.4l-3.7 5z`; });
    c.blues.split(' ').filter(Boolean).forEach(s => {
      const [z, h] = s.split(',').map(Number);
      (h === 1 ? (specks += `<path d="${rect(Math.floor(px(z)), 5, 2, 1)}" fill="#6c9cff" opacity=".6"/>`) : (tri += rect(Math.floor(px(z)), 5, 1.3, h)));
    });
  });
  const ax = t.axis - 4 + .5;
  const marks = Object.entries(paths).map(([k, d]) => `<path fill="${COLORS[k]}" d="${d}"/>`).join('');
  return `<svg class="plot" width="1456" height="254"><defs><mask id="m${n}" maskUnits="userSpaceOnUse" x="0" y="0" width="1456" height="254"><path fill="#fff" d="M0 0h1456v254H0z"/><path d="${holes}"/><path fill="#777" d="${faint}"/></mask></defs>
  <path fill="${GREY}" d="${cov}"/><path fill="${GREY}" d="${reads}" mask="url(#m${n})"/>${marks}${specks}<path fill="#0a3cff" d="${tri}"/>
  <path d="M${ax + 5} 6.500H${ax}V41H${ax + 5}" fill="none" stroke="#111" stroke-width="1.200"/><text x="${ax + 8}" y="10">${t.max}</text><text x="${ax + 8}" y="45">0</text></svg>`;
}
document.querySelectorAll('.track').forEach((el, i) => el.insertAdjacentHTML('beforeend', drawTrack([T1, T2, T3, T4][i], i)));

let g = '';
for (let i = 1; i < 44; i++) g += `<path d="${rect(Math.floor(87.4 + 31.26 * i), i % 4 ? 0 : 14, 1, 1044)}" fill="${i % 4 ? '#dcdcdc' : '#b5b5b5'}"/>`;
document.getElementById('grid').innerHTML = g;

let r = '<text class="ref" x="88" y="10.500" textLength="39.500">plasmid</text>';
for (let i = 1; i < 11; i++) r += `<text x="${87 + 125.05 * i}" y="11">${i},000</text>`;
r += '<text x="1463" y="11">11,000</text>';
document.getElementById('ruler').innerHTML = r;

let o = '<path d="M0 0h1427v20H0z" fill="#c1d3d6"/><path fill="none" stroke="#8d9a9c" stroke-opacity=".42" stroke-width="2" d="';
for (let x = 13; x < 1448; x += 30) o += `M${x - 12} 1.500L${x} 10 ${x - 12} 18.500`;
o += '"/><path d="M1427 .5h20.500v19H1427" fill="none" stroke="#777"/><path d="M.5 .5h1426.500v19H.5z" fill="none" stroke="#2e6e72"/><text class="ref" x="3" y="15" textLength="49">plasmid</text>';
for (let i = 1; i < 11; i++) o += `<text x="${1.4 + 131.2 * i}" y="13">${i},000</text>`;
document.getElementById('overview').innerHTML = o;
```
